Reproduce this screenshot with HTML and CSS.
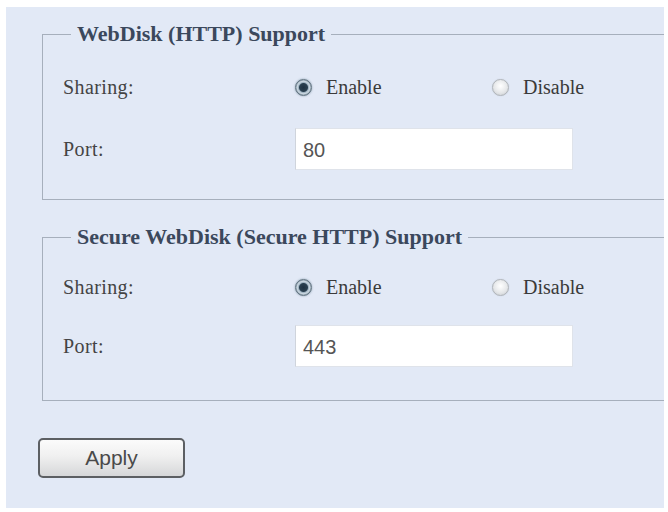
FILE: index.html
```html
<!DOCTYPE html>
<html>
<head>
<meta charset="utf-8">
<link rel="stylesheet" href="styles.css">
</head>
<body>
<div class="panel">
  <fieldset class="group">
    <legend class="group-title">WebDisk (HTTP) Support</legend>
    <div class="row">
      <span class="label">Sharing:</span>
      <label class="radio"><span class="dot dot-on"></span>Enable</label>
      <label class="radio"><span class="dot"></span>Disable</label>
    </div>
    <div class="row row-input">
      <span class="label">Port:</span>
      <input class="field" type="text" value="80">
    </div>
  </fieldset>
  <fieldset class="group group-second">
    <legend class="group-title">Secure WebDisk (Secure HTTP) Support</legend>
    <div class="row">
      <span class="label">Sharing:</span>
      <label class="radio"><span class="dot dot-on"></span>Enable</label>
      <label class="radio"><span class="dot"></span>Disable</label>
    </div>
    <div class="row row-input">
      <span class="label">Port:</span>
      <input class="field" type="text" value="443">
    </div>
  </fieldset>
  <button class="apply" type="button">Apply</button>
</div>
</body>
</html>
```
FILE: styles.css
```css
html, body {
  margin: 0;
  padding: 0;
  background: #ffffff;
}

body {
  font-family: "Liberation Serif", "Times New Roman", serif;
  width: 668px;
  height: 512px;
  overflow: hidden;
}

.panel {
  box-sizing: border-box;
  margin: 7px 4px 0 6px;
  height: 501px;
  background: #e2e9f6;
  padding-top: 15px;
  overflow: hidden;
}

.group {
  margin: 0 0 0 36px;
  padding: 0 0 29px 20px;
  border: 1px solid #a6afbc;
  border-right: none;
  min-width: 0;
}

.group-second {
  margin-top: 25px;
  padding-bottom: 33px;
}

.group-title {
  margin-left: 8px;
  padding: 0 6px;
  font-weight: bold;
  font-size: 22px;
  line-height: 24px;
  color: #3b485c;
}

.row {
  display: grid;
  grid-template-columns: 232px 197px 1fr;
  align-items: center;
  height: 40px;
  margin-top: 21px;
  font-size: 20px;
  color: #444444;
}

.row-input {
  height: 42px;
  grid-template-columns: 232px 278px;
}

.group-second .row {
  margin-top: 18px;
}

.label {
  color: #444444;
  letter-spacing: 0.4px;
}

.radio {
  display: flex;
  align-items: center;
  gap: 14px;
  color: #3a3a3a;
}

.dot {
  box-sizing: border-box;
  width: 17px;
  height: 17px;
  border-radius: 50%;
  border: 1px solid #b0b4b9;
  background: radial-gradient(circle at 50% 40%, #ffffff 0%, #e6e8ea 55%, #c6cacf 100%);
  box-shadow: 0 0 1px rgba(120, 130, 140, 0.4);
}

.dot-on {
  border: 1px solid #60727f;
  background: radial-gradient(circle, #1f3242 0, #2a4050 4px, #9fb3c2 5px, #cdd9e2 6.2px, #7f94a3 8px);
  box-shadow: 0 0 2px rgba(90, 120, 140, 0.7);
}

.field {
  box-sizing: border-box;
  width: 278px;
  height: 42px;
  margin: 0;
  padding: 2px 0 0 7px;
  border: 1px solid #dfe3ea;
  border-left-color: #cfd4dc;
  background: #ffffff;
  font-family: "Liberation Sans", Arial, sans-serif;
  font-size: 20px;
  color: #555555;
  outline: none;
}

.apply {
  display: block;
  box-sizing: border-box;
  width: 147px;
  height: 40px;
  margin: 37px 0 0 32px;
  padding: 0;
  border: 2px solid #5c5f63;
  border-radius: 5px;
  background: linear-gradient(#fbfbfb 0%, #f0f0f0 45%, #d6d7d9 100%);
  font-family: "Liberation Sans", Arial, sans-serif;
  font-size: 21px;
  color: #4a4a4a;
}
```
